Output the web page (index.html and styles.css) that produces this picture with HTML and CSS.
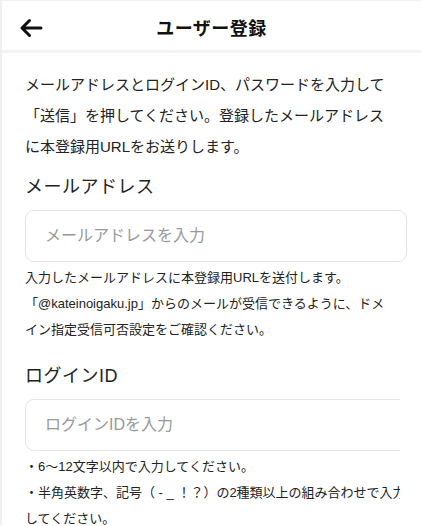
FILE: index.html
```html
<!DOCTYPE html>
<html lang="ja">
<head>
    <meta charset="utf-8">
    <title>ユーザー登録</title>
    <link rel="stylesheet" href="styles.css">
</head>
<body>
    <div class="page">
        <header class="top-bar">
            <button class="back" aria-label="戻る">
                <svg width="24" height="20" viewBox="0 0 24 20">
                    <path d="M22 10H3M10.5 2.5L3 10l7.5 7.5" fill="none" stroke="#111" stroke-width="3" stroke-linecap="round" stroke-linejoin="round"/>
                </svg>
            </button>
            <h1>ユーザー登録</h1>
        </header>

        <main class="content">
            <p class="lead">メールアドレスとログインID、パスワードを入力して「送信」を押してください。登録したメールアドレスに本登録用URLをお送りします。</p>

            <section class="field">
                <h2>メールアドレス</h2>
                <input type="email" placeholder="メールアドレスを入力">
                <p class="note">入力したメールアドレスに本登録用URLを送付します。<br>「@kateinoigaku.jp」からのメールが受信できるように、ドメイン指定受信可否設定をご確認ください。</p>
            </section>

            <section class="field clipped">
                <div class="inner">
                    <h2>ログインID</h2>
                    <input type="text" placeholder="ログインIDを入力">
                    <p class="note">・6〜12文字以内で入力してください。<br>・半角英数字、記号（ - _ ！？）の2種類以上の組み合わせで入力してください。</p>
                </div>
            </section>
        </main>
    </div>
</body>
</html>
```

FILE: styles.css
```css
* { box-sizing: border-box; }
body {
    margin: 0;
    font-family: "Liberation Sans", "Noto Sans CJK JP", sans-serif;
    color: #222;
    background: #fff;
}
.page {
    border-left: 2px solid #f0f0f2;
    border-top: 1px solid #f0f0f2;
    height: 525px;
    overflow: hidden;
}
.top-bar {
    height: 52px;
    padding-top: 3px;
    display: flex;
    align-items: center;
    justify-content: center;
    position: relative;
    border-bottom: 3px solid #f3f3f5;
}
.top-bar h1 {
    margin: 0;
    font-size: 18px;
    font-weight: bold;
    color: #111;
    letter-spacing: 0.5px;
}
.back {
    position: absolute;
    left: 17px;
    top: 17px;
    padding: 0;
    border: none;
    background: none;
    cursor: pointer;
}
.content { padding: 0 14px 0 23px; }
.lead {
    margin: 16px 0 0;
    padding-right: 16px;
    font-size: 15px;
    line-height: 31px;
    color: #222;
}
.field { margin-top: 10px; }
.field h2 {
    margin: 0;
    font-size: 18px;
    font-weight: normal;
    letter-spacing: 0.5px;
    line-height: 30px;
    color: #222;
}
.field input {
    display: block;
    width: 100%;
    height: 52px;
    margin-top: 8px;
    padding: 0 19px;
    border: 1px solid #e4e4e6;
    border-radius: 9px;
    font-family: inherit;
    font-size: 16px;
    outline: none;
}
.field input::placeholder { color: #999; }
.note {
    margin: 3px 0 0;
    padding-right: 16px;
    font-size: 13px;
    line-height: 26px;
    color: #222;
}
.field.clipped {
    margin-top: 18px;
    margin-right: 7px;
    overflow: hidden;
}
.clipped .inner { width: 390px; }
.clipped .note { padding-right: 0; }
```
